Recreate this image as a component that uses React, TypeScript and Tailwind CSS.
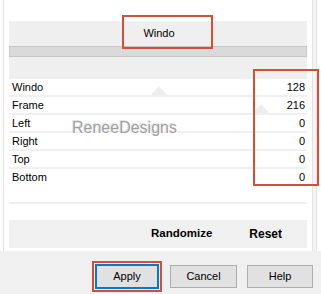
import React from 'react';

const rows = [
  { label: 'Windo', value: 128 },
  { label: 'Frame', value: 216 },
  { label: 'Left', value: 0 },
  { label: 'Right', value: 0 },
  { label: 'Top', value: 0 },
  { label: 'Bottom', value: 0 },
];

const TRACK = 298;

const App: React.FC = () => {
  return (
    <div className="relative h-[294px] w-[321px] overflow-hidden bg-[#f0f0f0] font-['Liberation_Sans',Arial,sans-serif] text-[11px] text-black">
      {/* settings panel */}
      <div className="flex h-[251px] bg-white">
        <div className="w-[3px]" />
        <div className="flex w-[310px] flex-col border-x border-[#e3e3e3] px-[5px]">
          <div className="h-[21px]" />
          <div className="flex flex-col bg-[#efefef]">
            <div className="flex h-[25px] items-center justify-center pl-[2px]">Windo</div>
            <div className="h-[11px] border border-[#c6c6c6] bg-[#dadada]" />
            <div className="h-[22px]" />
          </div>

          {rows.map((row, i) => (
            <div key={row.label}>
              <div className="relative flex h-[16px] items-center justify-between bg-white pl-[3px] pr-[2px] leading-none">
                {row.value > 0 && (
                  <svg
                    className="absolute bottom-0"
                    style={{ left: Math.round((row.value / 255) * TRACK) - 8 }}
                    width="16"
                    height="9"
                    viewBox="0 0 16 9"
                  >
                    <polygon points="0,9 8,0 16,9" fill="#ededed" />
                  </svg>
                )}
                <span className="relative">{row.label}</span>
                <span className="relative">{row.value}</span>
              </div>
              {i < rows.length - 1 && <div className="h-[2px] bg-[#f0f0f0]" />}
            </div>
          ))}

          <div className="h-[17px]" />
          <div className="h-[2px] bg-[#efefef]" />
          <div className="h-[16px]" />
          <div className="flex h-[28px] items-center justify-end gap-[37px] bg-[#f0f0f0] pr-[25px] text-[12px] font-bold">
            <span className="text-[11.5px]">Randomize</span>
            <span>Reset</span>
          </div>
        </div>
        <div className="w-[4px] border-r border-[#e3e3e3] bg-[#f4f4f4]" />
      </div>

      {/* dialog buttons */}
      <div className="flex items-center justify-end pr-[8px] pt-[10px]">
        <div className="mr-[8px] border-2 border-[#d44f3a] p-px">
          <button className="flex h-[25px] w-[64px] items-center justify-center border-2 border-[#0078d7] bg-[#e1e1e1]">
            Apply
          </button>
        </div>
        <button className="mr-[10px] flex h-[23px] w-[67px] items-center justify-center border border-[#adadad] bg-[#e1e1e1]">
          Cancel
        </button>
        <button className="flex h-[23px] w-[66px] items-center justify-center border border-[#adadad] bg-[#e1e1e1]">
          Help
        </button>
      </div>

      {/* annotations */}
      <div className="pointer-events-none absolute left-[122px] top-[15px] h-[34px] w-[91px] border-2 border-[#d44f3a]" />
      <div className="pointer-events-none absolute left-[253px] top-[69px] h-[117px] w-[66px] border-2 border-[#d44f3a]" />
      <div className="pointer-events-none absolute left-[72px] top-[120px] text-[16px] leading-none text-[#a0a0a0] [text-shadow:1px_1px_0_#ffffff,-1px_-1px_0_#e4e4e4]">
        ReneeDesigns
      </div>
    </div>
  );
};

export default App;
